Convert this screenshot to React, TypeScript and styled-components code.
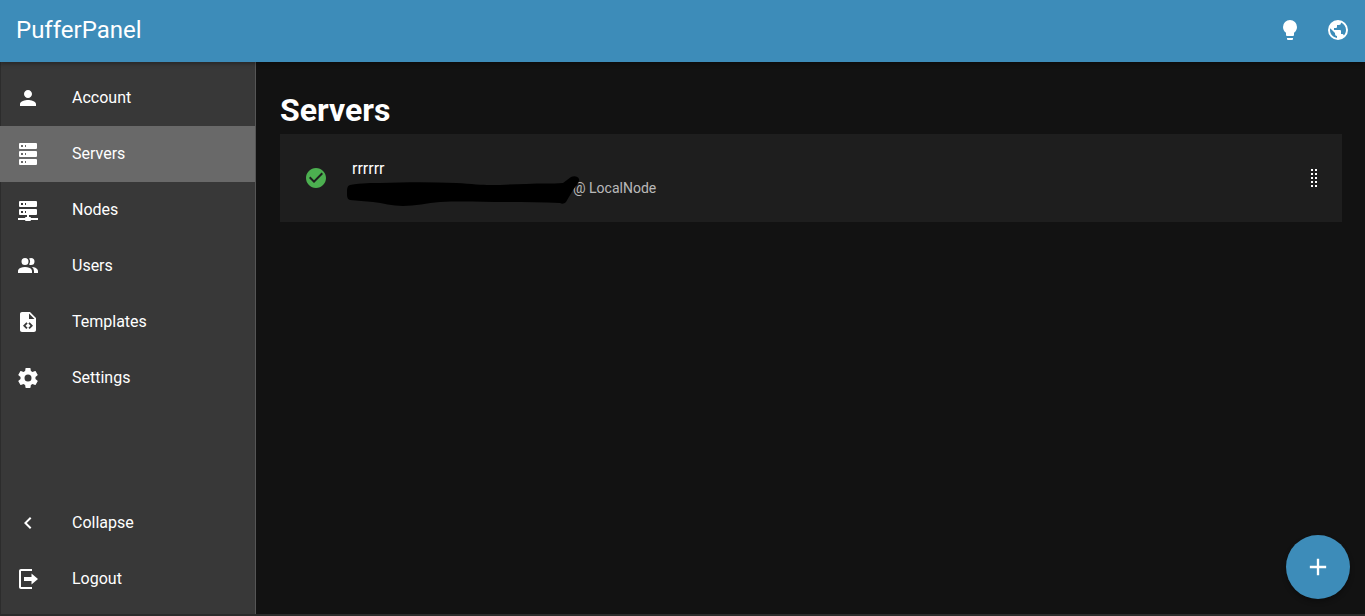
import React from 'react';
import styled, { createGlobalStyle } from 'styled-components';

const GlobalStyle = createGlobalStyle`
  html, body {
    margin: 0;
    height: 100%;
    background-color: #121212;
    overflow: hidden;
  }

  body {
    font-family: Roboto, "Liberation Sans", sans-serif;
    color: #fff;
  }
`;

const Page = styled.div`
  display: flex;
  flex-direction: column;
  height: 616px;
`;

const TopBar = styled.header`
  display: flex;
  align-items: center;
  justify-content: space-between;
  box-sizing: border-box;
  flex: 0 0 62px;
  padding: 0 15px 2px 16px;
  background-color: #3d8cb9;
  box-shadow: 0 2px 4px rgba(0, 0, 0, 0.3);
  z-index: 2;
`;

const Logo = styled.h1`
  margin: 0;
  font-size: 24px;
  font-weight: 400;
  line-height: 1;
`;

const TopActions = styled.div`
  display: flex;
  gap: 24px;
`;

const Body = styled.div`
  display: flex;
  flex: 1;
  min-height: 0;
`;

const BottomStrip = styled.div`
  flex: 0 0 2px;
  background-color: #2b2b2b;
`;

const Sidebar = styled.nav`
  display: flex;
  flex-direction: column;
  justify-content: space-between;
  box-sizing: border-box;
  flex: 0 0 256px;
  padding: 8px 0 7px;
  background-color: #383838;
  border-right: 1px solid #555;
  box-shadow: inset 1px 0 0 #2c2c2c;
`;

const NavGroup = styled.div`
  display: flex;
  flex-direction: column;
`;

const NavItem = styled.a<{ $active?: boolean }>`
  display: flex;
  align-items: center;
  gap: 32px;
  height: 56px;
  padding: 0 16px;
  font-size: 16px;
  color: #fff;
  background-color: ${({ $active }) => ($active ? '#696969' : 'transparent')};
`;

const NavLabel = styled.span`
  margin-bottom: 2px;
`;

const Icon = styled.svg<{ $size?: number }>`
  display: block;
  flex: none;
  width: ${({ $size }) => $size || 24}px;
  height: ${({ $size }) => $size || 24}px;
  fill: ${({ color }) => color || '#fff'};
`;

const Main = styled.main`
  position: relative;
  flex: 1;
  padding: 30px 23px 0 24px;
`;

const Title = styled.h2`
  margin: 0 0 6px;
  font-size: 32px;
  font-weight: 700;
  line-height: 36px;
`;

const ServerRow = styled.div`
  display: flex;
  align-items: center;
  height: 88px;
  padding: 0 16px 0 24px;
  background-color: #1e1e1e;
`;

const StatusIcon = styled.div`
  flex: 0 0 48px;
`;

const ServerText = styled.div`
  flex: 1;
  margin-bottom: 2px;
`;

const ServerName = styled.div`
  font-size: 16px;
  line-height: 24px;
`;

const ServerAddress = styled.div`
  margin-top: -3px;
  font-size: 14px;
  line-height: 20px;
  color: rgba(255, 255, 255, 0.7);
`;

const RedactedAddress = styled.span`
  position: relative;
  display: inline-block;
  width: 221px;
  height: 14px;
`;

const Scribble = styled.svg`
  position: absolute;
  left: -5px;
  top: -3px;
  width: 233px;
  height: 30px;
  fill: #000;
`;

const AddButton = styled.button`
  position: absolute;
  right: 15px;
  bottom: 15px;
  display: flex;
  align-items: center;
  justify-content: center;
  width: 64px;
  height: 64px;
  padding: 0;
  border: none;
  border-radius: 50%;
  background-color: #3d8cb9;
  box-shadow: 0 3px 5px rgba(0, 0, 0, 0.3);
`;

const paths = {
  account: 'M12 12c2.21 0 4-1.79 4-4s-1.79-4-4-4-4 1.79-4 4 1.79 4 4 4zm0 2c-2.67 0-8 1.34-8 4v2h16v-2c0-2.66-5.33-4-8-4z',
  server: 'M4,1H20A1,1 0 0,1 21,2V6A1,1 0 0,1 20,7H4A1,1 0 0,1 3,6V2A1,1 0 0,1 4,1M4,9H20A1,1 0 0,1 21,10V14A1,1 0 0,1 20,15H4A1,1 0 0,1 3,14V10A1,1 0 0,1 4,9M4,17H20A1,1 0 0,1 21,18V22A1,1 0 0,1 20,23H4A1,1 0 0,1 3,22V18A1,1 0 0,1 4,17M9,5H10V3H9V5M9,13H10V11H9V13M9,21H10V19H9V21M5,3V5H7V3H5M5,11V13H7V11H5M5,19V21H7V19H5Z',
  nodes: 'M13,19H14A1,1 0 0,1 15,20H22V22H15A1,1 0 0,1 14,23H10A1,1 0 0,1 9,22H2V20H9A1,1 0 0,1 10,19H11V17H4A1,1 0 0,1 3,16V12A1,1 0 0,1 4,11H20A1,1 0 0,1 21,12V16A1,1 0 0,1 20,17H13V19M4,3H20A1,1 0 0,1 21,4V8A1,1 0 0,1 20,9H4A1,1 0 0,1 3,8V4A1,1 0 0,1 4,3M9,7H10V5H9V7M9,15H10V13H9V15M5,5V7H7V5H5M5,13V15H7V13H5Z',
  users: 'M16 17V19H2V17S2 13 9 13 16 17 16 17M12.5 7.5A3.5 3.5 0 1 0 9 11A3.5 3.5 0 0 0 12.5 7.5M15.94 13A5.32 5.32 0 0 1 18 17V19H22V17S22 13.37 15.94 13M15 4A3.39 3.39 0 0 0 13.07 4.59A5 5 0 0 1 13.07 10.41A3.39 3.39 0 0 0 15 11A3.5 3.5 0 0 0 15 4Z',
  templates: 'M14 2H6C4.89 2 4 2.9 4 4V20C4 21.11 4.89 22 6 22H18C19.11 22 20 21.11 20 20V8L14 2M9.54 15.65L11.63 17.74L10.35 19L7 15.65L10.35 12.3L11.63 13.56L9.54 15.65M17 15.65L13.65 19L12.38 17.74L14.47 15.65L12.38 13.56L13.65 12.3L17 15.65M13 9V3.5L18.5 9H13Z',
  settings: 'M12,15.5A3.5,3.5 0 0,1 8.5,12A3.5,3.5 0 0,1 12,8.5A3.5,3.5 0 0,1 15.5,12A3.5,3.5 0 0,1 12,15.5M19.43,12.97C19.47,12.65 19.5,12.33 19.5,12C19.5,11.67 19.47,11.34 19.43,11L21.54,9.37C21.73,9.22 21.78,8.95 21.66,8.73L19.66,5.27C19.54,5.05 19.27,4.96 19.05,5.05L16.56,6.05C16.04,5.66 15.5,5.32 14.87,5.07L14.5,2.42C14.46,2.18 14.25,2 14,2H10C9.75,2 9.54,2.18 9.5,2.42L9.13,5.07C8.5,5.32 7.96,5.66 7.44,6.05L4.95,5.05C4.73,4.96 4.46,5.05 4.34,5.27L2.34,8.73C2.21,8.95 2.27,9.22 2.46,9.37L4.57,11C4.53,11.34 4.5,11.67 4.5,12C4.5,12.33 4.53,12.65 4.57,12.97L2.46,14.63C2.27,14.78 2.21,15.05 2.34,15.27L4.34,18.73C4.46,18.95 4.73,19.03 4.95,18.95L7.44,17.94C7.96,18.34 8.5,18.68 9.13,18.93L9.5,21.58C9.54,21.82 9.75,22 10,22H14C14.25,22 14.46,21.82 14.5,21.58L14.87,18.93C15.5,18.67 16.04,18.34 16.56,17.94L19.05,18.95C19.27,19.03 19.54,18.95 19.66,18.73L21.66,15.27C21.78,15.05 21.73,14.78 21.54,14.63L19.43,12.97Z',
  collapse: 'M15.41,16.58L10.83,12L15.41,7.41L14,6L8,12L14,18L15.41,16.58Z',
  logout: 'M16 2H5C3.9 2 3 2.9 3 4V20C3 21.1 3.9 22 5 22H16V20H5V4H16V2ZM15.5 6.5V10H8V14H15.5V17.5L22 12Z',
  bulb: 'M12,2A7,7 0 0,0 5,9C5,11.38 6.19,13.47 8,14.74V17A1,1 0 0,0 9,18H15A1,1 0 0,0 16,17V14.74C17.81,13.47 19,11.38 19,9A7,7 0 0,0 12,2M9,21A1,1 0 0,0 10,22H14A1,1 0 0,0 15,21V20H9V21Z',
  earth: 'M17.9,17.39C17.64,16.59 16.89,16 16,16H15V13A1,1 0 0,0 14,12H8V10H10A1,1 0 0,0 11,9V7H13A2,2 0 0,0 15,5V4.59C17.93,5.77 20,8.64 20,12C20,14.08 19.2,15.97 17.9,17.39M11,19.93C7.05,19.44 4,16.08 4,12C4,11.38 4.08,10.78 4.21,10.21L9,15V16A2,2 0 0,0 11,18M12,2A10,10 0 0,0 2,12A10,10 0 0,0 12,22A10,10 0 0,0 22,12A10,10 0 0,0 12,2Z',
  check: 'M12 2C6.5 2 2 6.5 2 12S6.5 22 12 22 22 17.5 22 12 17.5 2 12 2M10 17L5 12L6.41 10.59L10 14.17L17.59 6.58L19 8L10 17Z',
  drag: 'M9,3H11V5H9V3M13,3H15V5H13V3M9,7H11V9H9V7M13,7H15V9H13V7M9,11H11V13H9V11M13,11H15V13H13V11M9,15H11V17H9V15M13,15H15V17H13V15M9,19H11V21H9V19M13,19H15V21H13V19Z',
  plus: 'M19,13H13V19H11V13H5V11H11V5H13V11H19V13Z',
};

const Glyph = ({ d, color, size }: { d: string; color?: string; size?: number }) => (
  <Icon viewBox="0 0 24 24" color={color} $size={size}>
    <path d={d} />
  </Icon>
);

const topItems = [
  { label: 'Account', icon: paths.account },
  { label: 'Servers', icon: paths.server, active: true },
  { label: 'Nodes', icon: paths.nodes },
  { label: 'Users', icon: paths.users },
  { label: 'Templates', icon: paths.templates },
  { label: 'Settings', icon: paths.settings },
];

const bottomItems = [
  { label: 'Collapse', icon: paths.collapse },
  { label: 'Logout', icon: paths.logout },
];

export default function App() {
  return (
    <Page>
      <GlobalStyle />
      <TopBar>
        <Logo>PufferPanel</Logo>
        <TopActions>
          <Glyph d={paths.bulb} />
          <Glyph d={paths.earth} />
        </TopActions>
      </TopBar>
      <Body>
        <Sidebar>
          <NavGroup>
            {topItems.map((item) => (
              <NavItem key={item.label} $active={item.active}>
                <Glyph d={item.icon} />
                <NavLabel>{item.label}</NavLabel>
              </NavItem>
            ))}
          </NavGroup>
          <NavGroup>
            {bottomItems.map((item) => (
              <NavItem key={item.label}>
                <Glyph d={item.icon} />
                <NavLabel>{item.label}</NavLabel>
              </NavItem>
            ))}
          </NavGroup>
        </Sidebar>
        <Main>
          <Title>Servers</Title>
          <ServerRow>
            <StatusIcon>
              <Glyph d={paths.check} color="#4caf50" />
            </StatusIcon>
            <ServerText>
              <ServerName>rrrrrr</ServerName>
              <ServerAddress>
                <RedactedAddress>
                  <Scribble viewBox="0 0 233 30">
                    <path d="M3 9 C15 7 25 7 33 7 C60 6 85 6 109 7 C125 8 135 9 143 9 C155 9 167 8 179 8 C195 7 205 8 216 7 L224 1 C227 -0.5 231 0 232 3 C233 6 229 10 226 14 L219 26 C217 28 215 28 213 27 C195 26 177 26 159 26 C135 26 115 25 93 26 C80 27 68 30 56 30 C45 30 36 27 26 26 C18 25 10 25 3 24 C0 23 0 20 0 17 C0 13 0 10 3 9Z" />
                  </Scribble>
                </RedactedAddress>
                @ LocalNode
              </ServerAddress>
            </ServerText>
            <Glyph d={paths.drag} />
          </ServerRow>
          <AddButton aria-label="Add server">
            <Glyph d={paths.plus} size={28} />
          </AddButton>
        </Main>
      </Body>
      <BottomStrip />
    </Page>
  );
}
